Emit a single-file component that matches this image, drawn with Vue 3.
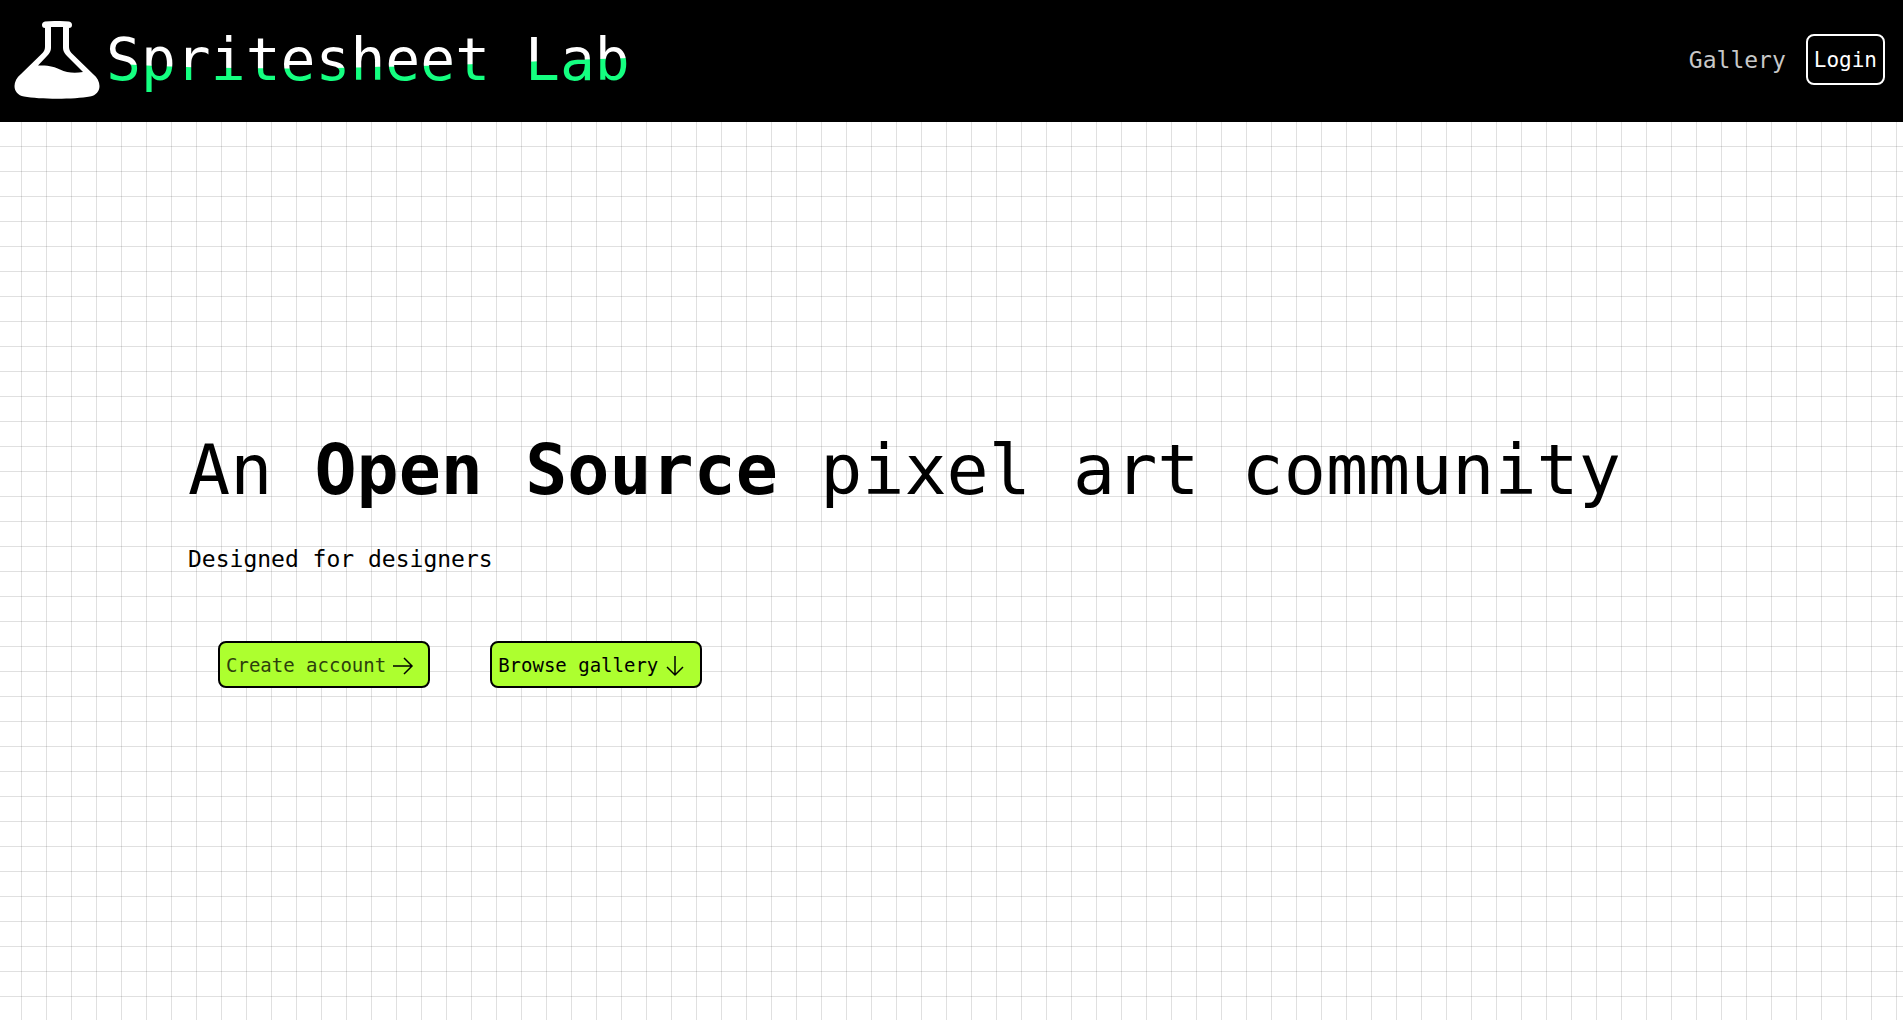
<script setup>
const navLinks = [{ label: 'Gallery', href: '#gallery' }]
</script>

<template>
  <div class="page">
    <header class="topbar">
      <a class="brand" href="#home">
        <svg class="flask" viewBox="0 0 86 78" aria-hidden="true">
          <path
            fill-rule="evenodd"
            d="M31 0.500C38 -0.200 48 -0.200 55 0.500Q58 1 58 4Q58 7 55 7V26Q55 30 59 33.500L79 53C89 61 87 74 76 75.500C60 78.500 26 78.500 10 75.500C-1 74 -3 61 7 53L27 33.500Q31 30 31 26V7Q28 7 28 4Q28 1 31 0.500ZM37 6V27Q37 31 33 35L24 44.500C35 44 41 46 46 48.500C53 52 61 52.500 69 51L53 35Q49 31 49 27V6Z"
          />
        </svg>
        <span class="wordmark">Spritesheet Lab</span>
      </a>
      <nav class="nav">
        <a v-for="link in navLinks" :key="link.label" class="nav-link" :href="link.href">{{ link.label }}</a>
        <button class="login" type="button">Login</button>
      </nav>
    </header>

    <main class="hero">
      <h1 class="headline">An <strong>Open Source</strong> pixel art community</h1>
      <p class="tagline">Designed for designers</p>
      <div class="actions">
        <button class="action" type="button">
          <span class="muted">Create account</span>
          <svg class="arrow" viewBox="0 0 24 24" aria-hidden="true">
            <path d="M2 13H21M13 5L21 13L13 21" />
          </svg>
        </button>
        <button class="action" type="button">
          <span>Browse gallery</span>
          <svg class="arrow" viewBox="0 0 24 24" aria-hidden="true">
            <path d="M12 3V22M4 14L12 22L20 14" />
          </svg>
        </button>
      </div>
    </main>
  </div>
</template>

<style>
body {
  margin: 0;
}
</style>

<style scoped>
.page {
  display: flex;
  flex-direction: column;
  min-height: 100vh;
  font-family: "DejaVu Sans Mono", monospace;
  color: #000;
  background-color: #fff;
  background-image:
    linear-gradient(rgba(0, 0, 0, 0.12) 1px, transparent 1px),
    linear-gradient(90deg, rgba(0, 0, 0, 0.12) 1px, transparent 1px);
  background-size: 25px 25px;
  background-position: -4px -4px;
}

.topbar {
  display: flex;
  align-items: center;
  justify-content: space-between;
  box-sizing: border-box;
  height: 122px;
  padding: 0 18px 3px 14px;
  background: #000;
}

.brand {
  display: flex;
  align-items: center;
  gap: 6px;
  text-decoration: none;
}

.flask {
  width: 86px;
  height: 78px;
  fill: #fff;
}

.wordmark {
  font-size: 58px;
  line-height: 82px;
  color: transparent;
  background-color: #fff;
  background-image: url("data:image/svg+xml,%3Csvg xmlns='http://www.w3.org/2000/svg' viewBox='0 0 100 80' preserveAspectRatio='none'%3E%3Cpath fill='%2314ff80' d='M0 43C16 49 34 49 50 47C72 45 84 40 100 38V80H0Z'/%3E%3C/svg%3E");
  background-size: 100% 100%;
  background-clip: text;
  -webkit-background-clip: text;
}

.nav {
  display: flex;
  align-items: center;
  gap: 20px;
}

.nav-link {
  font-size: 23px;
  color: #c8c8c8;
  text-decoration: none;
}

.login {
  height: 51px;
  padding: 0 6px;
  font-family: inherit;
  font-size: 21px;
  color: #fff;
  background: #000;
  border: 2px solid #fff;
  border-radius: 8px;
}

.hero {
  flex: 1;
  display: flex;
  flex-direction: column;
  justify-content: center;
  padding: 0 188px 29px;
}

.headline {
  margin: 0;
  font-size: 70px;
  font-weight: 400;
  line-height: 90px;
}

.tagline {
  margin: 29px 0 67px;
  font-size: 23px;
  line-height: 30px;
}

.actions {
  display: flex;
  gap: 60px;
  padding: 0 30px;
}

.action {
  display: flex;
  align-items: center;
  gap: 5px;
  height: 47px;
  padding: 0 13px 0 6px;
  font-family: inherit;
  font-size: 19px;
  color: #000;
  background: #adff2f;
  border: 2px solid #000;
  border-radius: 8px;
}

.muted {
  color: #2c400c;
}

.arrow {
  width: 24px;
  height: 24px;
  fill: none;
  stroke: #000;
  stroke-width: 1.500;
}
</style>
